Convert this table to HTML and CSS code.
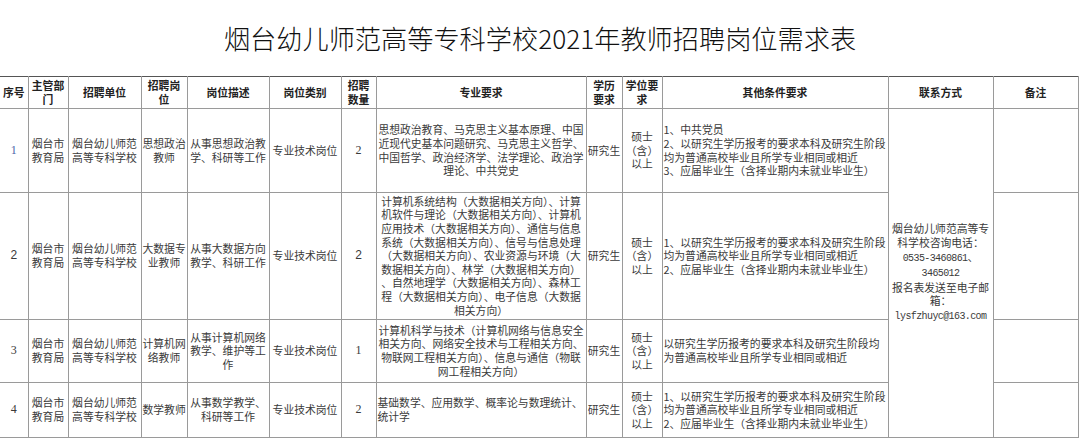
FILE: index.html
```html
<!DOCTYPE html>
<html lang="zh-CN">
<head>
<meta charset="utf-8">
<title>烟台幼儿师范高等专科学校2021年教师招聘岗位需求表</title>
<link rel="stylesheet" href="styles.css">
</head>
<body>
<div class="title">烟台幼儿师范高等专科学校2021年教师招聘岗位需求表</div>
<table class="sheet">
  <colgroup>
    <col class="c-no"><col class="c-dept"><col class="c-unit"><col class="c-post"><col class="c-desc"><col class="c-type"><col class="c-num"><col class="c-major"><col class="c-edu"><col class="c-deg"><col class="c-other"><col class="c-contact"><col class="c-note">
  </colgroup>
  <thead>
    <tr class="r-head">
      <th class="first">序号</th>
      <th>主管部<br>门</th>
      <th>招聘单位</th>
      <th>招聘岗<br>位</th>
      <th>岗位描述</th>
      <th>岗位类别</th>
      <th>招聘<br>数量</th>
      <th>专业要求</th>
      <th>学历<br>要求</th>
      <th>学位要<br>求</th>
      <th>其他条件要求</th>
      <th>联系方式</th>
      <th>备注</th>
    </tr>
  </thead>
  <tbody>
    <tr class="r1">
      <td class="first num serif blue">1</td>
      <td>烟台市<br>教育局</td>
      <td>烟台幼儿师范<br>高等专科学校</td>
      <td>思想政治<br>教师</td>
      <td>从事思想政治教<br>学、科研等工作</td>
      <td>专业技术岗位</td>
      <td class="num serif">2</td>
      <td>思想政治教育、马克思主义基本原理、中国<br>近现代史基本问题研究、马克思主义哲学、<br>中国哲学、政治经济学、法学理论、政治学<br>理论、中共党史</td>
      <td>研究生</td>
      <td>硕士<br>（含）<br>以上</td>
      <td class="left">1、中共党员<br>2、以研究生学历报考的要求本科及研究生阶段<br>均为普通高校毕业且所学专业相同或相近<br>3、应届毕业生（含择业期内未就业毕业生）</td>
      <td class="contact" rowspan="4">烟台幼儿师范高等专<br>科学校咨询电话：<br><span class="mono">0535-3460861</span>、<br><span class="mono">3465012</span><br>报名表发送至电子邮<br>箱：<br><span class="mono">lysfzhuyc@163.com</span></td>
      <td></td>
    </tr>
    <tr class="r2">
      <td class="first num sans">2</td>
      <td>烟台市<br>教育局</td>
      <td>烟台幼儿师范<br>高等专科学校</td>
      <td>大数据专<br>业教师</td>
      <td>从事大数据方向<br>教学、科研工作</td>
      <td>专业技术岗位</td>
      <td class="num sans">2</td>
      <td>计算机系统结构（大数据相关方向）、计算<br>机软件与理论（大数据相关方向）、计算机<br>应用技术（大数据相关方向）、通信与信息<br>系统（大数据相关方向）、信号与信息处理<br>（大数据相关方向）、农业资源与环境（大<br>数据相关方向）、林学（大数据相关方向）<br>、自然地理学（大数据相关方向）、森林工<br>程（大数据相关方向）、电子信息（大数据<br>相关方向）</td>
      <td>研究生</td>
      <td>硕士<br>（含）<br>以上</td>
      <td class="left">1、以研究生学历报考的要求本科及研究生阶段<br>均为普通高校毕业且所学专业相同或相近<br>2、应届毕业生（含择业期内未就业毕业生）</td>
      <td></td>
    </tr>
    <tr class="r3">
      <td class="first num serif">3</td>
      <td>烟台市<br>教育局</td>
      <td>烟台幼儿师范<br>高等专科学校</td>
      <td>计算机网<br>络教师</td>
      <td>从事计算机网络<br>教学、维护等工<br>作</td>
      <td>专业技术岗位</td>
      <td class="num serif">1</td>
      <td>计算机科学与技术（计算机网络与信息安全<br>相关方向、网络安全技术与工程相关方向、<br>物联网工程相关方向）、信息与通信（物联<br>网工程相关方向）</td>
      <td>研究生</td>
      <td>硕士<br>（含）<br>以上</td>
      <td class="left">以研究生学历报考的要求本科及研究生阶段均<br>为普通高校毕业且所学专业相同或相近</td>
      <td></td>
    </tr>
    <tr class="r4">
      <td class="first num serif">4</td>
      <td>烟台市<br>教育局</td>
      <td>烟台幼儿师范<br>高等专科学校</td>
      <td>数学教师</td>
      <td>从事数学教学、<br>科研等工作</td>
      <td>专业技术岗位</td>
      <td class="num serif">2</td>
      <td class="left">基础数学、应用数学、概率论与数理统计、<br>统计学</td>
      <td>研究生</td>
      <td>硕士<br>（含）<br>以上</td>
      <td class="left">1、以研究生学历报考的要求本科及研究生阶段<br>均为普通高校毕业且所学专业相同或相近<br>2、应届毕业生（含择业期内未就业毕业生）</td>
      <td></td>
    </tr>
  </tbody>
</table>
</body>
</html>
```

FILE: styles.css
```css
html, body {
  margin: 0;
  padding: 0;
  background: #ffffff;
}

body {
  width: 1080px;
  height: 441px;
  overflow: hidden;
  font-family: "Noto Sans CJK SC", "Noto Sans", sans-serif;
  color: #3a3a3a;
}

.title {
  height: 76px;
  display: flex;
  align-items: center;
  justify-content: center;
  font-size: 26.2px;
  font-weight: 300;
  line-height: 1;
  color: #111111;
}

.sheet {
  table-layout: fixed;
  border-collapse: collapse;
  width: 1078px;
  font-size: 10.8px;
  line-height: 13.6px;
}

.c-no { width: 28px; }
.c-dept { width: 40px; }
.c-unit { width: 73px; }
.c-post { width: 46px; }
.c-desc { width: 82px; }
.c-type { width: 72px; }
.c-num { width: 35px; }
.c-major { width: 210px; }
.c-edu { width: 36px; }
.c-deg { width: 40px; }
.c-other { width: 226px; }
.c-contact { width: 105px; }
.c-note { width: 85px; }

.sheet th,
.sheet td {
  border: 1px solid #9a9a9a;
  padding: 0 1px;
  text-align: center;
  vertical-align: middle;
  white-space: nowrap;
}

.sheet th {
  font-weight: 700;
  color: #222222;
  border-top: 1px solid #555555;
}

.sheet .first {
  border-left: none;
}

.r-head { height: 32px; }
.r1 { height: 84px; }
.r2 { height: 127px; }
.r3 { height: 63px; }
.r4 { height: 55px; }

.sheet td.left {
  text-align: left;
}

.num {
  font-size: 12px;
}

.serif {
  font-family: "Liberation Serif", serif;
}

.sans {
  font-family: "Liberation Sans", sans-serif;
}

.blue {
  color: #4a64a8;
}

.mono {
  font-family: "Liberation Mono", monospace;
  font-size: 10px;
  letter-spacing: -0.6px;
}
```
